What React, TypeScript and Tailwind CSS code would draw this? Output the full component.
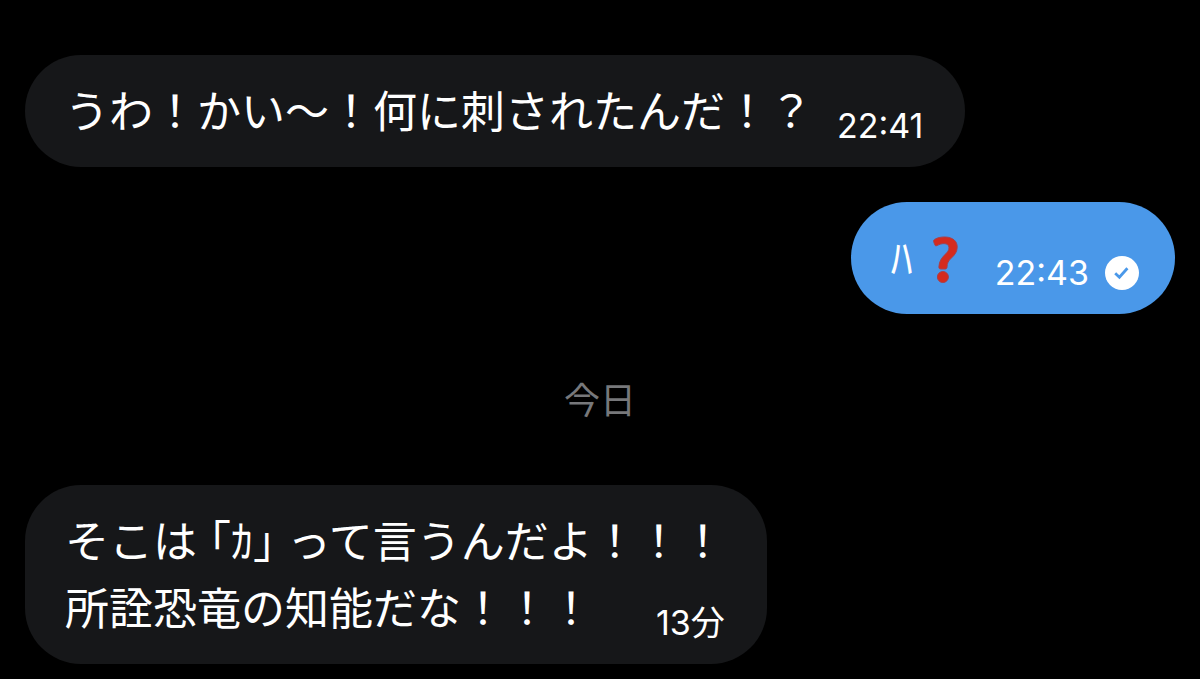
import type { ReactNode } from 'react';

// Red question mark emoji
function QuestionEmoji() {
  return (
    <svg viewBox="0 0 48 48" className="ml-2.5 w-12 h-12" role="img" aria-label="❓">
      <path
        d="M11.6 3.4C14.6 1.6 18.4 .8 22.6 1C30 1.4 34.4 5.2 34.2 11.4C34 16.2 31.6 19 28.4 22C25.2 25 24.2 27 24 31.2C24 32.4 23.2 33 22 33L17.8 33C16.4 33 15.8 32.2 15.9 30.8C16.2 25.4 18.6 22 22 18.6C24.6 16 26 14.4 26 11.8C26 9 24 7.6 21 7.6C18.4 7.6 16.4 8.4 14.4 9.4C13 10.1 12 9.8 11.7 8.6L10.6 5.4C10.4 4.5 10.8 3.9 11.6 3.4Z"
        fill="#d52b1e"
        stroke="#a8404a"
        strokeWidth="1"
      />
      <circle cx="19.9" cy="41" r="5.5" fill="#d52b1e" stroke="#a8404a" strokeWidth="1" />
    </svg>
  );
}

// Delivered mark shown after the time
function SentIcon() {
  return (
    <svg viewBox="0 0 34 34" className="w-[34px] h-[34px]" role="img" aria-label="送信済み">
      <circle cx="17" cy="17" r="17" fill="#fff" />
      <path d="M10.2 17.2L14.4 21.2L22.4 12.2" fill="none" stroke="#4a98e9" strokeWidth="2.8" />
    </svg>
  );
}

function Bubble({ own = false, children }: { own?: boolean; children: ReactNode }) {
  return (
    <div
      className={`rounded-[56px] pl-10 pt-6 pb-[21px] text-[44px] leading-[67px] text-white ${
        own ? 'self-end pr-9 bg-[#4a98e9]' : 'self-start pr-[42px] bg-[#161719]'
      }`}
    >
      {children}
    </div>
  );
}

function LastLine({ time, sent = false, children }: { time: string; sent?: boolean; children: ReactNode }) {
  return (
    <div className="flex items-end justify-between gap-6">
      <p className="flex items-center">{children}</p>
      <div className="flex items-center gap-4 text-[34px] leading-10">
        <time>{time}</time>
        {sent && <SentIcon />}
      </div>
    </div>
  );
}

export default function App() {
  return (
    <main
      lang="ja"
      className="min-h-screen bg-black px-[25px] pt-[55px] pb-3 flex flex-col font-['Inter','Noto_Sans_CJK_JP',sans-serif]"
    >
      <Bubble>
        <LastLine time="22:41">うわ！かい〜！何に刺されたんだ！？</LastLine>
      </Bubble>

      <div className="h-[35px]" />

      <Bubble own>
        <LastLine time="22:43" sent>
          ﾊ
          <QuestionEmoji />
        </LastLine>
      </Bubble>

      {/* Date separator */}
      <div className="pt-[62px] pb-[58px] text-center text-[36px] leading-[51px] text-[#77787b]">今日</div>

      <Bubble>
        <p>
          そこは<span className="mx-3 [font-feature-settings:'halt']">「ｶ」</span>って言うんだよ！！！
        </p>
        <LastLine time="13分">所詮恐竜の知能だな！！！</LastLine>
      </Bubble>
    </main>
  );
}
